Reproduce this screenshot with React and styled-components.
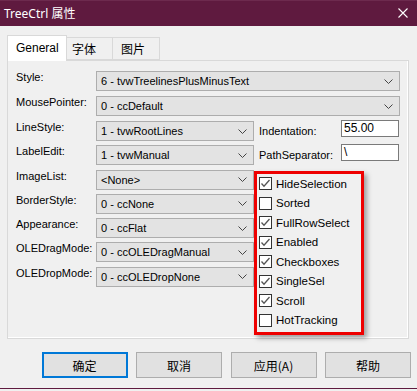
import React from 'react';
import styled, { createGlobalStyle } from 'styled-components';

const COLOURS = {
  title: '#5f1a3f',
  face: '#f0f0f0',
  tabBorder: '#d9d9d9',
  comboBg: '#e3e3e3',
  comboBorder: '#adadad',
  focus: '#0078d7',
  annotation: '#ee0000',
};

const GlobalStyle = createGlobalStyle`
  html, body {
    margin: 0;
    padding: 0;
    background: ${COLOURS.face};
  }
  body {
    font-family: "Liberation Sans", Arial, "Noto Sans CJK SC", sans-serif;
    font-size: 11px;
    color: #000;
  }
`;

const SWindow = styled.div`
  width: 417px;
  height: 389px;
  box-sizing: border-box;
  border-bottom: 1px solid ${COLOURS.title};
  background: ${COLOURS.face};
  display: flex;
  flex-direction: column;
`;

const STitleBar = styled.div`
  height: 26px;
  flex: none;
  background: ${COLOURS.title};
  border-top: 1px solid #6d2a4e;
  box-sizing: border-box;
  display: flex;
  align-items: center;
  justify-content: space-between;
  padding: 0 9px 1px 4px;
`;

const STitle = styled.div`
  color: #fff;
  font-family: "Noto Sans", "Noto Sans CJK SC", sans-serif;
  font-size: 12px;
`;

const SBody = styled.div`
  padding: 9px 8px 0 7px;
  display: flex;
  flex-direction: column;
`;

const STabRow = styled.div`
  display: flex;
  align-items: flex-end;
  height: 25px;
  position: relative;
  z-index: 1;
`;

const STab = styled.div`
  box-sizing: border-box;
  width: ${(p) => p.$width}px;
  height: ${(p) => (p.$active ? 26 : 23)}px;
  margin-bottom: ${(p) => (p.$active ? -1 : 0)}px;
  padding-left: ${(p) => p.$pad}px;
  display: flex;
  align-items: center;
  background: ${(p) => (p.$active ? '#fff' : COLOURS.face)};
  border: 1px solid ${COLOURS.tabBorder};
  border-bottom: ${(p) => (p.$active ? 'none' : `1px solid ${COLOURS.tabBorder}`)};
  border-left: ${(p) => (p.$first ? `1px solid ${COLOURS.tabBorder}` : 'none')};
  font-family: "Liberation Sans", Arial, "Noto Sans CJK SC", sans-serif;
  font-size: 12px;
  padding-bottom: ${(p) => (p.$active ? 2 : 0)}px;
`;

const SPanel = styled.div`
  box-sizing: border-box;
  height: 279px;
  border: 1px solid ${COLOURS.tabBorder};
  box-shadow: inset 0 -1px 0 #fff, inset -1px 0 0 #fff;
  padding: 10px 8px 0 8px;
  display: flex;
  flex-direction: column;
  gap: 5px;
`;

const SRow = styled.div`
  display: flex;
  align-items: flex-start;
  height: 20px;
`;

const SLabel = styled.div`
  width: 80px;
  flex: none;
  line-height: 13px;
  margin-top: 0;
  white-space: nowrap;
`;

const SCombo = styled.div`
  box-sizing: border-box;
  height: 20px;
  width: ${(p) => (p.$width ? `${p.$width}px` : 'auto')};
  flex: ${(p) => (p.$width ? 'none' : 1)};
  background: ${COLOURS.comboBg};
  border: 1px solid ${COLOURS.comboBorder};
  display: flex;
  align-items: center;
  justify-content: space-between;
  padding: 0 6px 0 4px;
  white-space: nowrap;
  overflow: hidden;
`;

const SSplit = styled.div`
  display: flex;
`;

const SLeftCol = styled.div`
  width: 238px;
  display: flex;
  flex-direction: column;
  gap: 4.3px;
`;

const SRightCol = styled.div`
  flex: 1;
  display: flex;
  flex-direction: column;
  gap: 4.3px;
`;

const SFieldRow = styled.div`
  height: 20px;
  display: flex;
  align-items: center;
  padding-left: 5px;
`;

const SFieldLabel = styled.div`
  width: 82px;
  flex: none;
  white-space: nowrap;
`;

const STextBox = styled.div`
  box-sizing: border-box;
  width: 58px;
  height: 17px;
  align-self: flex-start;
  margin-top: -1px;
  background: #fff;
  border: 1px solid #7a7a7a;
  padding-left: 2px;
  line-height: 15px;
  font-size: 12px;
`;

const SAnnotation = styled.div`
  box-sizing: border-box;
  width: 110px;
  height: 164px;
  margin-top: 1.5px;
  border: 3px solid ${COLOURS.annotation};
  box-shadow: 3px 3px 5px rgba(0, 0, 0, 0.35);
  padding: 0 0 2px 2px;
  display: flex;
  flex-direction: column;
`;

const SCheckRow = styled.div`
  height: 19.5px;
  display: flex;
  align-items: center;
  gap: 4px;
  font-size: 11.5px;
  font-family: "Liberation Sans", Arial, sans-serif;
`;

const SCheckBox = styled.div`
  box-sizing: border-box;
  width: 13px;
  height: 13px;
  flex: none;
  background: #fff;
  border: 1px solid #333;
  display: flex;
  align-items: center;
  justify-content: center;
`;

const SButtonRow = styled.div`
  display: flex;
  justify-content: flex-end;
  gap: 8.5px;
  margin-top: 13px;
  padding-right: 6px;
  margin-right: -8px;
`;

const SButton = styled.div`
  box-sizing: border-box;
  width: 86px;
  height: 26px;
  background: #e1e1e1;
  border: ${(p) => (p.$default ? `2px solid ${COLOURS.focus}` : '1px solid #adadad')};
  display: flex;
  align-items: center;
  justify-content: center;
  font-family: "Noto Sans CJK SC", "Liberation Sans", sans-serif;
  font-size: 12px;
`;

const Chevron = () => (
  <svg width="9" height="5" viewBox="0 0 9 5">
    <polyline points="0.5,0.5 4.5,4.5 8.5,0.5" fill="none" stroke="#444" strokeWidth="1" />
  </svg>
);

const CloseIcon = () => (
  <svg width="10" height="10" viewBox="0 0 10 10">
    <path d="M0.5 0.5 L9.5 9.5 M9.5 0.5 L0.5 9.5" stroke="#fff" strokeWidth="1.1" />
  </svg>
);

const Check = () => (
  <svg width="11" height="11" viewBox="0 0 11 11">
    <polyline points="1.5,5.5 4,8.2 9.5,2" fill="none" stroke="#555" strokeWidth="1.3" />
  </svg>
);

const Combo = ({ value, width }) => (
  <SCombo $width={width}>
    <span>{value}</span>
    <Chevron />
  </SCombo>
);

const wideFields = [
  ['Style:', '6 - tvwTreelinesPlusMinusText'],
  ['MousePointer:', '0 - ccDefault'],
];

const leftFields = [
  ['LineStyle:', '1 - tvwRootLines'],
  ['LabelEdit:', '1 - tvwManual'],
  ['ImageList:', '<None>'],
  ['BorderStyle:', '0 - ccNone'],
  ['Appearance:', '0 - ccFlat'],
  ['OLEDragMode:', '0 - ccOLEDragManual'],
  ['OLEDropMode:', '0 - ccOLEDropNone'],
];

const options = [
  ['HideSelection', true],
  ['Sorted', false],
  ['FullRowSelect', true],
  ['Enabled', true],
  ['Checkboxes', true],
  ['SingleSel', true],
  ['Scroll', true],
  ['HotTracking', false],
];

const App = () => (
  <>
    <GlobalStyle />
    <SWindow>
      <STitleBar>
        <STitle>TreeCtrl 属性</STitle>
        <CloseIcon />
      </STitleBar>
      <SBody>
        <STabRow>
          <STab $active $first $width={60} $pad={8}>General</STab>
          <STab $width={46} $pad={5}>字体</STab>
          <STab $width={47} $pad={8}>图片</STab>
        </STabRow>
        <SPanel>
          {wideFields.map(([label, value]) => (
            <SRow key={label}>
              <SLabel>{label}</SLabel>
              <Combo value={value} />
            </SRow>
          ))}
          <SSplit>
            <SLeftCol>
              {leftFields.map(([label, value]) => (
                <SRow key={label}>
                  <SLabel>{label}</SLabel>
                  <Combo value={value} width={158} />
                </SRow>
              ))}
            </SLeftCol>
            <SRightCol>
              <SFieldRow>
                <SFieldLabel>Indentation:</SFieldLabel>
                <STextBox>55.00</STextBox>
              </SFieldRow>
              <SFieldRow>
                <SFieldLabel>PathSeparator:</SFieldLabel>
                <STextBox>\</STextBox>
              </SFieldRow>
              <SAnnotation>
                {options.map(([name, checked]) => (
                  <SCheckRow key={name}>
                    <SCheckBox>{checked && <Check />}</SCheckBox>
                    {name}
                  </SCheckRow>
                ))}
              </SAnnotation>
            </SRightCol>
          </SSplit>
        </SPanel>
        <SButtonRow>
          <SButton $default>确定</SButton>
          <SButton>取消</SButton>
          <SButton>应用(A)</SButton>
          <SButton>帮助</SButton>
        </SButtonRow>
      </SBody>
    </SWindow>
  </>
);

export default App;
